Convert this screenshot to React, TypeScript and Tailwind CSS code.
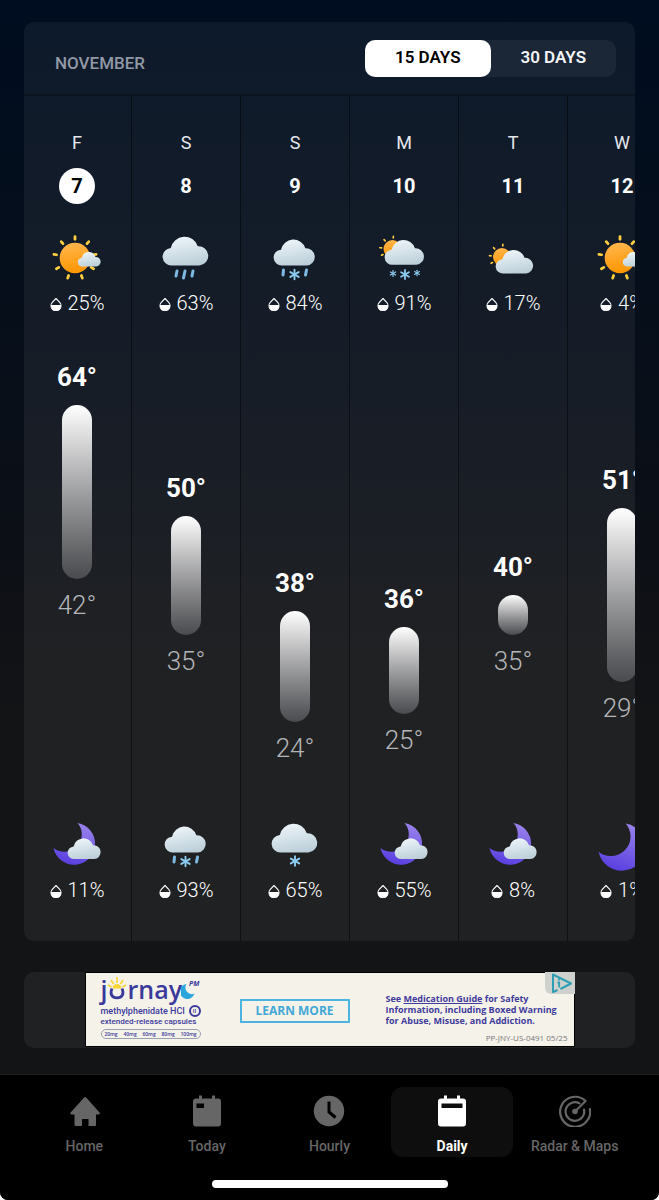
import React, { PropsWithChildren } from "react";
import clsx from "clsx";

type Condition =
  | "sunny"
  | "rain"
  | "mix"
  | "sunSnow"
  | "partlyCloudy"
  | "snow"
  | "moonCloud"
  | "moon";

type Day = {
  weekday: string;
  date: number;
  day: Condition;
  dayPrecip: number;
  high: number;
  low: number;
  night: Condition;
  nightPrecip: number;
};

const DAYS: Day[] = [
  { weekday: "F", date: 7, day: "sunny", dayPrecip: 25, high: 64, low: 42, night: "moonCloud", nightPrecip: 11 },
  { weekday: "S", date: 8, day: "rain", dayPrecip: 63, high: 50, low: 35, night: "mix", nightPrecip: 93 },
  { weekday: "S", date: 9, day: "mix", dayPrecip: 84, high: 38, low: 24, night: "snow", nightPrecip: 65 },
  { weekday: "M", date: 10, day: "sunSnow", dayPrecip: 91, high: 36, low: 25, night: "moonCloud", nightPrecip: 55 },
  { weekday: "T", date: 11, day: "partlyCloudy", dayPrecip: 17, high: 40, low: 35, night: "moonCloud", nightPrecip: 8 },
  { weekday: "W", date: 12, day: "sunny", dayPrecip: 4, high: 51, low: 29, night: "moon", nightPrecip: 1 },
];

const TODAY = 7;
const MAX_TEMP = Math.max(...DAYS.map((d) => d.high));
const PX_PER_DEGREE = 7.93;

function Gradients() {
  return (
    <svg className="absolute h-0 w-0" aria-hidden="true">
      <defs>
        <linearGradient id="cloud" x1="0.3" y1="0" x2="0.6" y2="1">
          <stop offset="0" stopColor="#edf5f9" />
          <stop offset="1" stopColor="#bccfd9" />
        </linearGradient>
        <linearGradient id="sun" x1="0.35" y1="0" x2="0.5" y2="1">
          <stop offset="0" stopColor="#ffb64d" />
          <stop offset="1" stopColor="#ff9500" />
        </linearGradient>
        <linearGradient id="moonFill" x1="0.7" y1="0" x2="0.4" y2="1">
          <stop offset="0" stopColor="#9a83ea" />
          <stop offset="1" stopColor="#5a3fe0" />
        </linearGradient>
      </defs>
    </svg>
  );
}

function Cloud({ x, y, scale = 1 }: { x: number; y: number; scale?: number }) {
  return (
    <path
      transform={`translate(${x} ${y}) scale(${scale})`}
      d="M9 30A8.800 8.800 0 0 1 7.800 12.400A14 14 0 0 1 34.800 10.800A9.600 9.600 0 0 1 36.500 30Z"
      fill="url(#cloud)"
    />
  );
}

function Sun({
  x,
  y,
  r,
  rays,
}: {
  x: number;
  y: number;
  r: number;
  rays: number[];
}) {
  return (
    <g transform={`translate(${x} ${y})`}>
      <circle r={r} fill="url(#sun)" />
      {rays.map((angle) => (
        <line
          key={angle}
          transform={`rotate(${angle})`}
          y1={-r * 1.22}
          y2={-r * 1.4}
          stroke="#ffcf3f"
          strokeWidth={r * 0.18}
          strokeLinecap="round"
        />
      ))}
    </g>
  );
}

function Flake({ x, y, r }: { x: number; y: number; r: number }) {
  return (
    <g
      transform={`translate(${x} ${y})`}
      stroke="#8ccbf0"
      strokeWidth={r * 0.4}
      strokeLinecap="round"
    >
      {[0, 60, 120].map((angle) => (
        <line key={angle} transform={`rotate(${angle})`} y1={-r} y2={r} />
      ))}
    </g>
  );
}

function Drops({ d }: { d: string }) {
  return <path d={d} stroke="#7db9e2" strokeWidth="3" strokeLinecap="round" />;
}

function Moon({ scale = 1 }: { scale?: number }) {
  return (
    <path
      transform={`scale(${scale})`}
      d="M24.500 4A21 21 0 1 1 0.500 29A17.400 17.400 0 0 0 24.500 4Z"
      fill="url(#moonFill)"
    />
  );
}

const SMALL_RAYS = [-120, -84, -42, 4];
const ALL_RAYS = [0, 40, 80, 120, 160, 200, 240, 280, 320];

function WeatherIcon({ name }: { name: Condition }) {
  return (
    <svg viewBox="0 0 48 48" fill="none" className="size-12 overflow-visible" role="img" aria-label={name}>
      {name === "sunny" && (
        <>
          <Sun x={22} y={26} r={15.3} rays={ALL_RAYS} />
          <Cloud x={25} y={19.5} scale={0.5} />
        </>
      )}
      {name === "rain" && (
        <>
          <Cloud x={1} y={3.5} />
          <Drops d="M15 39L14 44M23 39L21.500 46M31 39L30 44" />
        </>
      )}
      {name === "mix" && (
        <>
          <Cloud x={3} y={6.5} scale={0.9} />
          <Drops d="M12.500 38L12 43M35.500 38L34.500 43" />
          <Flake x={23.5} y={42.5} r={4.8} />
        </>
      )}
      {name === "sunSnow" && (
        <>
          <Sun x={12.5} y={17} r={9} rays={SMALL_RAYS} />
          <Cloud x={5} y={7} scale={0.86} />
          <Flake x={13} y={41.5} r={3} />
          <Flake x={25} y={42.5} r={4.5} />
          <Flake x={37} y={41} r={2.8} />
        </>
      )}
      {name === "partlyCloudy" && (
        <>
          <Sun x={13} y={25} r={9} rays={SMALL_RAYS} />
          <Cloud x={7} y={17} scale={0.82} />
        </>
      )}
      {name === "snow" && (
        <>
          <Cloud x={1} y={3.5} />
          <Flake x={24} y={42} r={4.8} />
        </>
      )}
      {name === "moonCloud" && (
        <>
          <Moon />
          <Cloud x={15} y={18.5} scale={0.72} />
        </>
      )}
      {name === "moon" && <Moon scale={1.13} />}
    </svg>
  );
}

function Precip({ value }: { value: number }) {
  return (
    <div className="mt-[11px] flex h-6 items-center gap-1.5 text-[20px] font-light">
      <svg viewBox="0 0 12 14" fill="none" className="mt-0.5 h-[14px] w-3">
        <path d="M6 1.500L9.700 5.400a5 5 0 1 1-7.400 0Z" stroke="#fff" strokeWidth="1.100" strokeLinejoin="round" />
        <path d="M1 8h10v1a5 5 0 0 1-10 0Z" fill="#fff" />
      </svg>
      <span>{value}%</span>
    </div>
  );
}

function DayColumn({ data }: { data: Day }) {
  return (
    <li className="flex w-[109px] shrink-0 flex-col items-center border-r border-black/50 pt-[35px] pb-[39px]">
      <div className="text-[18px] leading-6 text-gray-200">{data.weekday}</div>
      <div
        className={clsx(
          "mt-[13px] flex size-9 items-center justify-center rounded-full text-[20px] font-bold",
          data.date === TODAY && "bg-white text-black",
        )}
      >
        {data.date}
      </div>
      <div className="mt-7">
        <WeatherIcon name={data.day} />
      </div>
      <Precip value={data.dayPrecip} />
      <div className="mt-[46px] flex h-[458px] flex-col items-center">
        <div
          className="text-[26px] leading-8 font-bold"
          style={{ marginTop: Math.round((MAX_TEMP - data.high) * PX_PER_DEGREE) }}
        >
          {data.high}°
        </div>
        <div
          className="mt-3 w-[30px] shrink-0 rounded-full bg-linear-to-b from-white to-[#4a4b4e]"
          style={{ height: Math.round((data.high - data.low) * PX_PER_DEGREE) }}
        />
        <div className="mt-2.5 text-[26px] leading-8 font-light text-[#b4b5b8]">{data.low}°</div>
      </div>
      <WeatherIcon name={data.night} />
      <Precip value={data.nightPrecip} />
    </li>
  );
}

function RangeToggle() {
  return (
    <div className="flex h-[37px] w-[251px] rounded-[10px] bg-[#1b2636] text-[17px] font-semibold">
      <button className="flex-1 rounded-[10px] bg-white pb-0.5 text-black">15 DAYS</button>
      <button className="flex-1 rounded-[10px] pb-0.5 text-gray-100">30 DAYS</button>
    </div>
  );
}

function JornayLogo() {
  return (
    <div className="w-[100px] shrink-0 font-['Open_Sans',sans-serif] text-[#3a3a9c]">
      <div className="flex h-[29px] items-start">
        <span className="text-[25px] leading-[26px] font-semibold">j</span>
        <svg viewBox="0 0 20 28" fill="none" className="h-7 w-5">
          <path d="M5.500 12.500a4.500 4.500 0 0 1 9 0Z" fill="#f8d63a" />
          <path
            d="M10 7V1M6.500 8L4 4M13.500 8L16 4M4.500 11L1 9M15.500 11L19 9"
            stroke="#f8d63a"
            strokeWidth="1.800"
          />
          <path d="M5 12.500C2.500 18 5 21.800 10 21.800S17.500 18 15 12.500" stroke="#3a3a9c" strokeWidth="2.800" />
        </svg>
        <span className="text-[25px] leading-[26px] font-semibold">rnay</span>
        <svg viewBox="0 0 14 16" fill="none" className="mt-2 -ml-px h-4 w-3.5 shrink-0">
          <path d="M5.500 0A7.500 7.500 0 1 0 13.500 9.500A6.500 6.500 0 0 1 5.500 0Z" fill="#2ba6dd" />
        </svg>
        <span className="-ml-1.5 pt-0.5 text-[7px] leading-3 font-bold italic">PM</span>
      </div>
      <div className="flex items-center justify-between font-[Roboto,sans-serif] text-[9px] leading-[12px] font-medium whitespace-nowrap">
        methylphenidate HCI
        <span className="flex size-3 shrink-0 items-center justify-center rounded-full border-2 border-[#3a3a9c] text-[6px]">
          II
        </span>
      </div>
      <div className="font-[Roboto,sans-serif] text-[8px] leading-[10px] font-medium whitespace-nowrap">
        extended-release capsules
      </div>
      <div className="mt-0.5 flex h-2.5 items-center justify-around rounded-full border border-gray-400 text-[5px] leading-none font-semibold">
        <span>20mg</span>
        <span>40mg</span>
        <span>60mg</span>
        <span>80mg</span>
        <span>100mg</span>
      </div>
    </div>
  );
}

function AdBanner() {
  return (
    <aside className="mt-[31px] flex h-[76px] justify-center rounded-[10px] bg-[#202123]">
      <div className="relative flex h-[75px] w-[490px] items-start border border-black bg-[#f5f2ea] pl-[15px] font-['Open_Sans',sans-serif]">
        <div className="pt-[3px]">
          <JornayLogo />
        </div>
        <a
          href="#learn"
          className="mt-[26px] ml-[39px] flex h-6 w-[110px] shrink-0 items-center justify-center border-2 border-[#4db4df] text-[12px] font-bold text-[#41a8d6]"
        >
          LEARN MORE
        </a>
        <div className="ml-9 pt-5 text-[9px] leading-[11px] font-bold whitespace-nowrap text-[#3f3c9c]">
          See{" "}
          <a href="#guide" className="underline">
            Medication Guide
          </a>{" "}
          for Safety
          <br />
          Information, including Boxed Warning
          <br />
          for Abuse, Misuse, and Addiction.
        </div>
        <div className="absolute right-1.5 bottom-0.5 text-[8px] leading-3 text-[#77777a]">
          PP-JNY-US-0491 05/25
        </div>
        <a
          href="#adchoices"
          aria-label="AdChoices"
          className="absolute -top-px -right-px flex h-[22px] w-[30px] items-center justify-center rounded-bl-md bg-[#cfd1cf]"
        >
          <svg viewBox="0 0 22 20" fill="none" className="ml-1 h-5 w-[22px]">
            <path d="M6.500 17L2 19V1.500L20 10.500L9.500 16" stroke="#2e9fb3" strokeWidth="2" strokeLinejoin="round" />
            <path d="M8 5.500v2M6.500 9.500H8.200V14.500" stroke="#2e9fb3" strokeWidth="1.800" />
          </svg>
        </a>
      </div>
    </aside>
  );
}

function NavItem({
  label,
  active,
  children,
}: PropsWithChildren<{ label: string; active?: boolean }>) {
  return (
    <a
      href={`#${label.toLowerCase()}`}
      aria-current={active ? "page" : undefined}
      className={clsx(
        "flex h-[70px] flex-1 flex-col items-center rounded-xl pt-2 text-[14px] leading-5 whitespace-nowrap",
        active ? "bg-[#0e0e0e] font-bold text-white" : "font-medium text-[#666666]",
      )}
    >
      <svg viewBox="0 0 32 32" fill="none" className="mb-[9px] size-8 shrink-0">
        {children}
      </svg>
      {label}
    </a>
  );
}

function TabBar() {
  return (
    <footer className="mt-[26px] border-t border-[#1c1c1c] bg-black px-[23px] pt-3 pb-3">
      <nav className="flex">
        <NavItem label="Home">
          <path
            d="M16 2.700a1.600 1.600 0 0 1 2.400 0L31.500 17.500c.7.900.2 2-.9 2H28V30a1 1 0 0 1-1 1H20.500v-7h-6.500v7H7.500a1 1 0 0 1-1-1V19.500H3.500c-1.100 0-1.600-1.100-.9-2Z"
            fill="currentColor"
          />
        </NavItem>
        <NavItem label="Today">
          <path
            fillRule="evenodd"
            d="M8 .500h3v3h10v-3h3v3h3a3 3 0 0 1 3 3V28.500a3 3 0 0 1-3 3H5a3 3 0 0 1-3-3V6.500a3 3 0 0 1 3-3h3ZM5.500 8.500v4.500h7.500V8.500Z"
            fill="currentColor"
          />
        </NavItem>
        <NavItem label="Hourly">
          <circle cx="16" cy="16" r="15.200" fill="currentColor" />
          <path d="M16 6.500v10.500l6.500 5.500" stroke="#000" strokeWidth="3" />
        </NavItem>
        <NavItem label="Daily" active>
          <path
            fillRule="evenodd"
            d="M8 .500h3v3h10v-3h3v3h3a3 3 0 0 1 3 3V28.500a3 3 0 0 1-3 3H5a3 3 0 0 1-3-3V6.500a3 3 0 0 1 3-3h3ZM5.500 8.500v4.500h21V8.500Z"
            fill="currentColor"
          />
        </NavItem>
        <NavItem label="Radar & Maps">
          <g stroke="currentColor" strokeWidth="2.200" strokeLinecap="round" strokeLinejoin="round">
            <path d="M16 16.500L26.600 6A15 15 0 1 0 30.900 14" />
            <path d="M20.500 8.400A9.300 9.300 0 1 0 25 14.500" />
          </g>
          <circle cx="16" cy="16.500" r="2.800" fill="currentColor" />
        </NavItem>
      </nav>
      <div className="mx-auto mt-[23px] h-2 w-[236px] rounded-full bg-white" />
    </footer>
  );
}

export default function App() {
  return (
    <div className="bg-white font-[Roboto,sans-serif] text-white">
      <Gradients />
      <div className="overflow-hidden rounded-b-lg bg-linear-to-b from-[#000d20] via-[#0c0f16] via-45% to-[#131416] to-60%">
        <main className="px-6 pt-[22px]">
          <section className="overflow-hidden rounded-[10px] bg-linear-to-b from-[#0d1a2b] via-[#181d26] via-45% to-[#202123] to-70%">
            <header className="flex items-start justify-between border-b-2 border-black/30 pt-[18px] pr-[19px] pb-[17px] pl-[31px]">
              <h2 className="pt-[11px] text-[17px] leading-6 font-medium text-[#9298a5]">NOVEMBER</h2>
              <RangeToggle />
            </header>
            <ul className="-ml-px flex">
              {DAYS.map((d) => (
                <DayColumn key={d.date} data={d} />
              ))}
            </ul>
          </section>
          <AdBanner />
        </main>
        <TabBar />
      </div>
    </div>
  );
}
